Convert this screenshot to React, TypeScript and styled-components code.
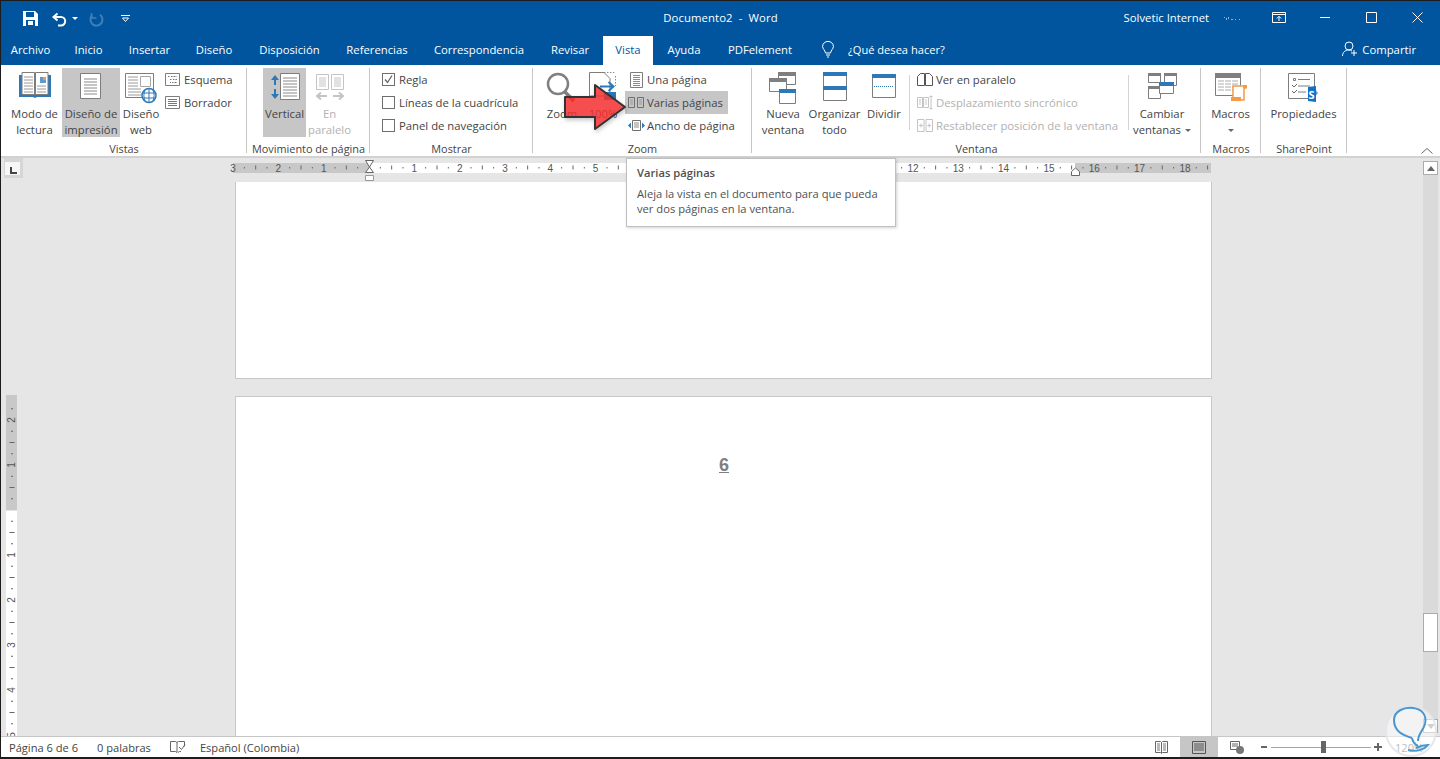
import React from "react";
import styled, { createGlobalStyle } from "styled-components";

const GlobalStyle = createGlobalStyle`
  html, body { margin: 0; padding: 0; background: #fff; }
  body { font-family: "Open Sans", "Noto Sans", "Liberation Sans", sans-serif; font-size: 11.3px; color: #444; }
  * { box-sizing: border-box; }
`;

const BLUE = "#01559f";
const G = "#7d7d7d";
const LG = "#a8a8a8";
const D = "#c4c4c4";
const B = "#2f78b7";
const O = "#f59a45";

const Root = styled.div`
  position: relative; width: 1440px; height: 759px; overflow: hidden;
  display: flex; flex-direction: column;
  border-top: 1px solid #1c1c1c; border-left: 1px solid #1c1c1c; border-bottom: 2px solid #1c1c1c;
  background: #e6e6e6;
`;
const TitleBar = styled.header`
  height: 35px; flex: none; background: ${BLUE}; color: #fff;
  display: grid; grid-template-columns: 1fr auto 1fr; align-items: center;
`;
const Qat = styled.div`display: flex; align-items: center; padding-left: 22px;`;
const QatItem = styled.span<{ $ml: number }>`display: flex; margin-left: ${p => p.$ml}px;`;
const DocTitle = styled.div`font-size: 11.3px; letter-spacing: .1px; white-space: pre; margin-top: -3px;`;
const TitleRight = styled.div`display: flex; justify-content: flex-end; align-items: center;`;
const UserName = styled.span`font-size: 11.3px; white-space: nowrap; margin-top: -3px;`;
const Account = styled.span`display: flex; margin: 0 15px 0 14px;`;
const WinButton = styled.span`width: 46px; display: flex; justify-content: center; margin-top: -3px;`;

const TabBar = styled.nav`height: 29px; flex: none; background: ${BLUE}; display: flex; align-items: stretch;`;
const Tab = styled.div<{ $w: number; $active?: boolean }>`
  width: ${p => p.$w}px; flex: none; display: flex; align-items: center; justify-content: center;
  font-size: 11.3px; white-space: nowrap; padding-bottom: 3px;
  color: ${p => (p.$active ? BLUE : "#fff")}; background: ${p => (p.$active ? "#fff" : "transparent")};
`;
const TellMe = styled.div`display: flex; align-items: center; color: #fff; font-size: 11.1px; margin-left: 17px; gap: 14px; white-space: nowrap; padding-bottom: 3px;`;
const Share = styled.div`display: flex; align-items: center; color: #fff; font-size: 11.3px; margin-left: auto; gap: 4px; padding: 0 24px 3px 0; white-space: nowrap;`;

const Ribbon = styled.section`
  height: 93px; flex: none; background: #fff; border-bottom: 2px solid #d2d2d2;
  padding-top: 3px; display: flex; align-items: flex-start;
`;
const Group = styled.div<{ $w: number }>`
  width: ${p => p.$w}px; height: 85px; flex: none; border-right: 1px solid #c6c6c6;
  display: flex; flex-direction: column;
`;
const GroupBody = styled.div<{ $pl?: number }>`height: 69px; display: flex; padding-left: ${p => p.$pl ?? 0}px; flex: none;`;
const GroupLabel = styled.div`height: 16px; margin-top: 4px; line-height: 16px; text-align: center; font-size: 10.9px; white-space: nowrap; margin-right: -1px;`;
const LargeButton = styled.div<{ $w: number; $on?: boolean; $off?: boolean; $ml?: number }>`
  width: ${p => p.$w}px; flex: none; height: 69px; display: flex; flex-direction: column; align-items: center;
  margin-left: ${p => p.$ml ?? 0}px;
  background: ${p => (p.$on ? "#c6c6c6" : "transparent")};
  color: ${p => (p.$off ? "#b1b1b1" : "#444")};
`;
const IconSlot = styled.div<{ $pt?: number }>`height: 38px; flex: none; padding-top: ${p => p.$pt ?? 4}px; display: flex; justify-content: center;`;
const LargeText = styled.div`font-size: 11.3px; line-height: 16px; text-align: center; white-space: nowrap;`;
const Caret = styled.span<{ $flush?: boolean }>`
  display: inline-block; width: 0; height: 0; margin-left: ${p => (p.$flush ? 0 : 4)}px; vertical-align: middle;
  border-left: 3px solid transparent; border-right: 3px solid transparent; border-top: 3px solid #666;
`;
const RowColumn = styled.div<{ $w?: number; $ml?: number }>`
  display: flex; flex-direction: column; flex: none; margin-left: ${p => p.$ml ?? 0}px;
  ${p => (p.$w ? `width:${p.$w}px;` : "")}
`;
const SmallRow = styled.div<{ $on?: boolean; $off?: boolean }>`
  height: 23px; display: flex; align-items: center; white-space: nowrap; font-size: 11.3px;
  background: ${p => (p.$on ? "#c6c6c6" : "transparent")};
  color: ${p => (p.$off ? "#b1b1b1" : "#444")};
`;
const RowIcon = styled.span<{ $w: number }>`width: ${p => p.$w}px; flex: none; display: flex; justify-content: center;`;
const Checkbox = styled.span`width: 13px; height: 13px; border: 1px solid #6f6f6f; background: #fff; display: block;`;
const InnerSep = styled.div<{ $ml: number }>`width: 1px; height: 55px; margin: 7px 0 0 ${p => p.$ml}px; background: #d4d4d4; flex: none;`;
const Collapse = styled.div`margin: 80px 7px 0 auto; display: flex;`;

const Main = styled.div`flex: 1; min-height: 0; display: flex;`;
const LeftColumn = styled.div`flex: 1; min-width: 0; display: flex; flex-direction: column;`;
const RulerRow = styled.div`height: 24px; flex: none; display: flex; align-items: flex-start; padding-left: 3px;`;
const Corner = styled.div`
  width: 19px; height: 20px; background: #d6d6d6; padding: 4px 3px 3px 1px; flex: none;
`;
const CornerFace = styled.div`
  width: 15px; height: 13px; background: #f7f7f7; position: relative;
  &::after { content: ""; position: absolute; left: 5px; top: 5px; width: 5px; height: 5px; border-left: 2px solid #444; border-bottom: 2px solid #444; }
`;
const Doc = styled.div`flex: 1; min-height: 0; display: flex; padding-left: 5px; overflow: hidden;`;
const Pages = styled.div`margin-left: 218px; width: 977px; display: flex; flex-direction: column; gap: 17px; flex: none;`;
const Page = styled.div<{ $h: number; $top?: boolean }>`
  height: ${p => p.$h}px; flex: none; background: #fff; border: 1px solid #c8c8c8;
  ${p => (p.$top ? "border-top: none;" : "")}
`;
const PageNumber = styled.div`
  margin-top: 56px; padding-left: 1px; text-align: center; font-family: "Liberation Sans", sans-serif; font-weight: 700;
  font-size: 18px; line-height: 24px; color: #7f7f7f; text-decoration: underline;
`;
const Scrollbar = styled.div`width: 15px; margin-right: 2px; flex: none; display: flex; flex-direction: column; padding: 3px 0 3px;`;
const ScrollButton = styled.div<{ $down?: boolean }>`
  height: 14px; flex: none; background: #fff; border: 1px solid #ababab; display: flex; align-items: center; justify-content: center;
  &::after {
    content: ""; width: 0; height: 0; border-left: 4px solid transparent; border-right: 4px solid transparent;
    ${p => (p.$down ? "border-top: 5px solid #a0a0a0;" : "border-bottom: 5px solid #666;")}
  }
`;
const Track = styled.div`flex: 1; background: #dadada; padding-top: 438px;`;
const Thumb = styled.div`height: 39px; background: #fff; border: 1px solid #ababab;`;

const StatusBar = styled.footer`
  height: 21px; flex: none; background: #fff; border-top: 1px solid #c6c6c6; display: flex; align-items: stretch;
  font-size: 11.1px; padding-right: 19px; color: #444;
`;
const StatusText = styled.span<{ $ml: number }>`margin-left: ${p => p.$ml}px; display: flex; align-items: center; white-space: nowrap;`;
const StatusIcon = styled.span<{ $ml: number }>`margin-left: ${p => p.$ml}px; display: flex; align-items: center;`;
const ViewButton = styled.span<{ $on?: boolean; $first?: boolean }>`
  width: 38px; display: flex; align-items: center; justify-content: center;
  ${p => (p.$first ? "margin-left: auto;" : "")}
  background: ${p => (p.$on ? "#c6c6c6" : "transparent")};
`;
const ZoomMinus = styled.span`width: 6px; height: 2px; background: #666; align-self: center; margin-left: 5px;`;
const ZoomTrack = styled.span`position: relative; width: 100px; height: 1px; background: #a6a6a6; align-self: center; margin: 0 3px 0 4px;`;
const ZoomThumb = styled.span`position: absolute; left: 50px; top: -6px; width: 5px; height: 12px; background: #666;`;
const ZoomPlus = styled.span`
  position: relative; width: 8px; height: 8px; align-self: center;
  &::before { content: ""; position: absolute; left: 0; top: 3px; width: 8px; height: 2px; background: #666; }
  &::after { content: ""; position: absolute; left: 3px; top: 0; width: 2px; height: 8px; background: #666; }
`;
const ZoomPercent = styled.span`width: 26px; margin-left: 13px; display: flex; align-items: center; white-space: nowrap; color: #777;`;

const Tooltip = styled.div`
  position: absolute; left: 625px; top: 157px; width: 270px; height: 69px; background: #fff;
  border: 1px solid #bfbfbf; box-shadow: 1px 1px 3px rgba(0,0,0,.18); padding: 6px 10px; color: #505050; font-size: 11.2px; line-height: 15px;
`;
const TooltipTitle = styled.div`font-weight: 600; margin-bottom: 6px;`;
const Overlay = styled.svg<{ $x: number; $y: number }>`position: absolute; left: ${p => p.$x}px; top: ${p => p.$y}px; display: block; overflow: visible;`;
const ArrowOverlay = styled(Overlay)`filter: drop-shadow(1px 2px 2px rgba(0,0,0,.25));`;
const RulerSvg = styled.svg`display: block; flex: none; overflow: visible; margin: -1px 0 0 210px;`;

const Ic = styled.svg`display: block; flex: none; overflow: visible;`;
const hl = (x1: number, x2: number, ys: number[]) => ys.map(y => `M${x1} ${y}H${x2}`).join("");

const Icon = ({ w, h, children }: { w: number; h: number; children: React.ReactNode }) => (
  <Ic width={w} height={h} viewBox={`0 0 ${w} ${h}`} fill="none">{children}</Ic>
);

/* Title bar */
const SaveIcon = () => (
  <Icon w={15} h={15}>
    <path d="M0 0h12l3 3v12H0z" fill="#fff" />
    <path d="M3 1h8v5H3z" fill={BLUE} />
    <path d="M3 9h9v6H3z" fill={BLUE} />
    <path d="M5 10h5v4H5z" fill="#fff" />
  </Icon>
);
const UndoIcon = ({ c = "#fff" }: { c?: string }) => (
  <Icon w={15} h={14}>
    <path d="M5.500 1.500 1.500 5l4 3.500" stroke={c} strokeWidth="2" />
    <path d="M2 5h7a4.200 4.200 0 0 1 0 8.400H6" stroke={c} strokeWidth="2" />
  </Icon>
);
const RedoIcon = () => (
  <Icon w={14} h={14}>
    <path d="M3.400 3.200a6 6 0 1 0 7.600-.4" stroke="#3f80ba" strokeWidth="2" />
    <path d="M2.500 1v5H7.500" stroke="#3f80ba" strokeWidth="1.600" />
  </Icon>
);
const TinyCaret = () => <Icon w={6} h={3}><path d="M0 0h6L3 3z" fill="#fff" /></Icon>;
const CustomizeIcon = () => (
  <Icon w={9} h={7}><path d="M0 .5h9" stroke="#fff" /><path d="M1.500 3h6L4.500 6.500z" stroke="#fff" /></Icon>
);
const AccountDots = () => (
  <Icon w={18} h={5}><path d="M1 1h1v1H1zM3 2h1v2H3zM5 1h1v2H5zM8 3h2v1H8zM12 3h1v1h-1zM16 3h1v1h-1z" fill="#8fb4d6" /></Icon>
);
const RibbonOptions = () => (
  <Icon w={14} h={11}>
    <path d="M.5.5h13v10H.5z" stroke="#fff" /><path d="M.5 2.500h13" stroke="#fff" />
    <path d="M7 9V4.500M4.800 6.500 7 4.300l2.200 2.200" stroke="#fff" />
  </Icon>
);
const MinIcon = () => <Icon w={10} h={10}><path d="M0 5.500h10" stroke="#fff" /></Icon>;
const MaxIcon = () => <Icon w={11} h={11}><path d="M.5.5h10v10H.5z" stroke="#fff" /></Icon>;
const CloseIcon = () => <Icon w={11} h={11}><path d="M.5.5l10 10M10.500.5l-10 10" stroke="#fff" /></Icon>;
const Bulb = () => (
  <Icon w={12} h={17}>
    <path d="M3.500 12C3 9 .6 8 .6 5.400a5.400 5 0 0 1 10.800 0C11.400 8 9 9 8.500 12z" stroke="#fff" />
    <path d="M4 14h4M5 16h2" stroke="#fff" />
  </Icon>
);
const ShareIcon = () => (
  <Icon w={16} h={16}>
    <circle cx="7" cy="5" r="4" stroke="#fff" />
    <path d="M.5 15c0-3.500 2.500-6 6-6 1.500 0 2.500.4 3.500 1" stroke="#fff" />
    <path d="M12 9v6M9 12h6" stroke="#fff" />
  </Icon>
);

/* Vistas */
const BookIcon = () => (
  <Icon w={32} h={26}>
    <path d="M0 3h32v22H18l-2 1-2-1H0z" fill={B} />
    <path d="M3 .5h12.500v22H3zM16.500.5H29v22H16.500z" fill="#fff" stroke={G} />
    <path d={hl(5, 14, [5, 8, 11, 14, 17, 20])} stroke="#9a9a9a" />
    <path d={hl(18, 27, [14, 17, 20])} stroke="#9a9a9a" />
    <path d="M21 5h6v6h-6z" fill="#5b9bd0" />
    <path d="M24 5h3v3h-3z" fill={O} />
  </Icon>
);
const PrintPageIcon = () => (
  <Icon w={22} h={27}>
    <path d="M.5.5h20v25H.5z" fill="#fff" stroke={G} />
    <path d={hl(4, 17, [6, 9, 12, 15, 18, 21])} stroke="#8a8a8a" />
  </Icon>
);
const WebIcon = () => (
  <Icon w={32} h={31}>
    <path d="M.5.5h28v24H.5z" fill="#fff" stroke={G} />
    <path d="M15.500 3.500h10v10h-10z" stroke={LG} />
    <path d={hl(3, 13, [4, 7, 10, 13])} stroke="#9a9a9a" />
    <path d={hl(3, 16, [16, 19, 22])} stroke="#9a9a9a" />
    <circle cx="24" cy="22.500" r="7" fill="#fff" stroke={B} strokeWidth="1.500" />
    <path d="M17 20h14M17 25h14M24 15.500v14M20 17c-1.500 4-1.500 7 0 11M28 17c1.500 4 1.500 7 0 11" stroke={B} />
  </Icon>
);
const EsquemaIcon = () => (
  <Icon w={15} h={13}>
    <path d="M.5.5h14v12H.5z" stroke={G} />
    <path d="M3 3.500h2M6 3.500h6M5 6.500h2M8 6.500h4M5 9.500h1M7 9.500h5" stroke="#777" strokeDasharray="1 .5" />
  </Icon>
);
const BorradorIcon = () => (
  <Icon w={15} h={13}>
    <path d="M.5.5h14v12H.5z" stroke={G} />
    <path d={hl(3, 12, [3.5, 5.5, 7.5, 9.5])} stroke="#777" />
  </Icon>
);
const CheckMark = () => <Icon w={11} h={11}><path d="M2 5.500 4.500 8.500 9 1.500" stroke="#666" strokeWidth="1.300" /></Icon>;

/* Movimiento */
const VerticalIcon = () => (
  <Icon w={30} h={28}>
    <path d="M5 2 1 7h3v5h2V7h3zM5 26 1 21h3v-5h2v5h3z" fill={B} />
    <path d="M10.500.5h19v26h-19z" fill="#fff" stroke={G} />
    <path d={hl(13, 27, [5, 8, 11, 14, 17, 20, 23])} stroke="#8a8a8a" />
  </Icon>
);
const ParallelIcon = () => (
  <Icon w={28} h={27}>
    <path d="M.5.5h12v15H.5zM15.500.5h12v15h-12z" stroke={D} />
    <path d={hl(3, 10, [4, 6, 8, 10, 12])} stroke={D} />
    <path d={hl(18, 25, [4, 6, 8, 10, 12])} stroke={D} />
    <path d="M5 18.500 1 22l4 3.500M1.500 22H11M23 18.500 27 22l-4 3.500M26.500 22H17" stroke={D} strokeWidth="2" />
  </Icon>
);

/* Zoom */
const MagnifierIcon = () => (
  <Icon w={30} h={29}>
    <path d="M17 18l6 6" stroke="#808080" strokeWidth="3.500" />
    <path d="M23 24l4 4" stroke="#a04a3a" strokeWidth="4" />
    <circle cx="11" cy="11" r="10" fill="#fff" stroke="#808080" strokeWidth="2.500" />
  </Icon>
);
const HundredIcon = () => (
  <Icon w={28} h={29}>
    <path d="M.5.5H15l6 6V24H.5z" fill="#fff" stroke={G} />
    <path d="M15 .5h10v2M26.500 4v10" stroke="#8a8a8a" strokeDasharray="1.500 1.500" />
    <path d="M11 14.500h13M19.500 10l5 4.500-5 4.500" stroke={B} strokeWidth="2" />
    <path d="M15 20h12v8H15z" fill={B} />
  </Icon>
);
const OnePageIcon = () => (
  <Icon w={13} h={16}>
    <path d="M.5.5h12v15H.5z" stroke={G} />
    <path d={hl(3, 10, [3.5, 5.5, 7.5, 9.5, 11.5, 13.5])} stroke="#8a8a8a" />
  </Icon>
);
const TwoPagesIcon = () => (
  <Icon w={16} h={11}>
    <path d="M.5.5h6v10h-6zM9.500.5h6v10h-6z" stroke="#6f6f6f" />
    <path d={hl(2, 5, [3, 5, 7])} stroke="#9a9a9a" />
    <path d={hl(11, 14, [3, 5, 7])} stroke="#9a9a9a" />
  </Icon>
);
const PageWidthIcon = () => (
  <Icon w={17} h={11}>
    <path d="M4.500.5h8v10h-8z" stroke="#6f6f6f" />
    <path d={hl(6, 11, [3, 5, 7])} stroke="#8a8a8a" />
    <path d="M3 2.500 0 5.500l3 3zM14 2.500l3 3-3 3z" fill={B} />
  </Icon>
);

/* Ventana */
const WindowBox = ({ x, y, w, h, bar, fill = "#fff" }: { x: number; y: number; w: number; h: number; bar: string; fill?: string }) => (
  <>
    <path d={`M${x + 0.5} ${y + 0.5}h${w - 1}v${h - 1}h-${w - 1}z`} fill={fill} stroke={G} />
    <path d={`M${x} ${y}h${w}v4h-${w}z`} fill={bar} />
  </>
);
const NewWindowIcon = () => (
  <Icon w={28} h={32}>
    <WindowBox x={9} y={0} w={18} h={13} bar="#7f7f7f" />
    <WindowBox x={0} y={6} w={18} h={14} bar="#7f7f7f" />
    <WindowBox x={10} y={17} w={17} h={15} bar={B} />
  </Icon>
);
const ArrangeIcon = () => (
  <Icon w={24} h={29}>
    <path d="M.5.5h23v28H.5z" fill="#fff" stroke={G} />
    <path d="M0 0h24v4H0zM0 14h24v4H0z" fill={B} />
  </Icon>
);
const SplitIcon = () => (
  <Icon w={24} h={24}>
    <path d="M.5.5h23v23H.5z" fill="#fff" stroke={G} />
    <path d="M0 0h24v4H0z" fill={B} />
    <path d="M2 12.500h20" stroke={B} strokeDasharray="1 1" />
  </Icon>
);
const SideBySideIcon = () => (
  <Icon w={16} h={13}>
    <path d="M.5 3.500l3-3h4v12h-7zM8.500.5h4l3 3v9h-7z" stroke="#555" />
  </Icon>
);
const SyncIcon = () => (
  <Icon w={16} h={15}>
    <path d="M.5 2.500h5v10h-5zM6.500 2.500h5v10h-5z" stroke={D} />
    <path d={hl(2, 4, [5, 7, 9])} stroke={D} /><path d={hl(8, 10, [5, 7, 9])} stroke={D} />
    <path d="M14 .5v14M12.500 1.500h3M12.500 13.500h3" stroke={D} />
  </Icon>
);
const ResetIcon = () => (
  <Icon w={16} h={13}>
    <path d="M.5.5h6.500v12H.5zM9 .5h6.500v12H9z" stroke={D} />
    <path d="M2 6.500h4M4 4.500v4M10.500 6.500h3.500M12.200 4.500v4" stroke={D} />
  </Icon>
);
const SwitchIcon = () => (
  <Icon w={29} h={26}>
    <path d="M.5.5h12v9H.5zM16.500.5h12v12h-12zM.5 13.500h12v12H.5z" stroke={G} />
    <path d="M0 0h13v3H0zM16 0h13v3H16zM0 13h13v3H0z" fill="#7f7f7f" />
    <WindowBox x={11} y={9} w={15} h={12} bar={B} />
  </Icon>
);
const MacrosIcon = () => (
  <Icon w={32} h={29}>
    <path d="M.5.5h25v22H.5z" fill="#fff" stroke={G} />
    <path d="M0 0h26v5H0z" fill="#7f7f7f" />
    <path d={hl(3, 23, [8, 11, 14, 17])} stroke="#aaa" strokeDasharray="6 1" />
    <path d="M18 13h13v2h-2v12H18z" fill="#fff" stroke={O} strokeWidth="1.500" />
    <path d="M16 24h10v4H16z" fill={O} />
    <path d="M28 12h4v3h-4z" fill={O} />
  </Icon>
);
const PropsIcon = () => (
  <Icon w={31} h={30}>
    <path d="M.5.5h26v25H.5z" fill="#fff" stroke={G} />
    <path d="M5.500 5.500h2v2h-2z" stroke={G} />
    <path d="M10 6.500h12M10 13h12M10 19h8" stroke={G} />
    <path d="M4 12l2 2 3-3M4 18l2 2 3-3" stroke="#666" />
    <path d="M26 15l4 5-4 5z" fill="#5a9fd8" />
    <path d="M20 14l8-1v16l-8-1z" fill="#1173c7" />
    <text x="20.500" y="26" fontSize="11" fontWeight="700" fill="#fff" fontFamily="Open Sans, sans-serif">S</text>
  </Icon>
);
const ChevronUp = () => <Icon w={12} h={6}><path d="M.5 5.500 6 .5l5.500 5" stroke="#666" /></Icon>;

/* Status */
const ProofIcon = () => (
  <Icon w={16} h={14}>
    <path d="M.5 1.500h5l1.500 1v10l-1.500-1h-5zM8 12.500l1.500-1H11M7 2.500l1.500-1h6v5" stroke="#666" />
    <path d="M9 7l2.500 2.500L15 4.500" stroke="#666" />
  </Icon>
);
const ReadIcon = () => (
  <Icon w={13} h={13}>
    <path d="M.5.5h5l1 1 1-1h5v11h-5l-1 1-1-1h-5zM6.500 1.500v11" stroke="#666" />
    <path d={hl(2, 5, [3, 5, 7, 9])} stroke="#777" /><path d={hl(8, 11, [3, 5, 7, 9])} stroke="#777" />
  </Icon>
);
const LayoutIcon = () => (
  <Icon w={14} h={13}>
    <path d="M.5.5h13v12H.5z" stroke="#555" />
    <path d={hl(2, 12, [3, 5, 7, 9])} stroke="#555" />
  </Icon>
);
const StatusWebIcon = () => (
  <Icon w={14} h={13}>
    <path d="M.5.5h9v8h-9z" stroke="#666" />
    <path d={hl(2, 8, [3, 5])} stroke="#666" />
    <circle cx="10" cy="9" r="4" fill="#777" />
  </Icon>
);

/* Rulers */
const RULER_FONT = '"Liberation Sans", sans-serif';
const HorizontalRuler = () => {
  const zero = 136, u = 45.33;
  const marks: React.ReactNode[] = [];
  for (let k = -12; k <= 74; k++) {
    if (k === 0) continue;
    if (k > 22 && k < 47) continue; // lies under the tooltip
    const x = zero + (k * u) / 4;
    if (k % 4 === 0) {
      marks.push(<text key={k} x={x} y="15" fontSize="10" fill="#555" textAnchor="middle" fontFamily={RULER_FONT}>{Math.abs(k / 4)}</text>);
    } else if (k % 2 === 0) {
      marks.push(<path key={k} d={`M${x} 8.500v4`} stroke="#666" />);
    } else {
      marks.push(<path key={k} d={`M${x} 10v1.500`} stroke="#666" />);
    }
  }
  return (
    <RulerSvg width={979} height={25} viewBox="0 0 979 25">
      <path d="M0 6h136v10H0zM842 6h136v10H842z" fill="#c8c8c8" />
      <path d="M136 6h706v10H136z" fill="#fff" />
      {marks}
      <path d="M132.500 3.500h8L136.500 10l4 5.500h-8l4-5.500z" fill="#fff" stroke="#666" />
      <path d="M132.500 18.500h8v5h-8z" fill="#fff" stroke="#999" />
      <path d="M838.500 14.500 842.500 11l4 3.500v4h-8z" fill="#fff" stroke="#666" />
    </RulerSvg>
  );
};
const VerticalRuler = () => {
  const zero = 328, u = 45;
  const marks: React.ReactNode[] = [];
  for (let k = -9; k <= 21; k++) {
    if (k === 0) continue;
    const y = zero + (k * u) / 4;
    if (k % 4 === 0) {
      marks.push(<text key={k} transform={`translate(9 ${y}) rotate(-90)`} fontSize="10" fill="#555" textAnchor="middle" fontFamily={RULER_FONT}>{Math.abs(k / 4)}</text>);
    } else if (k % 2 === 0) {
      marks.push(<path key={k} d={`M3.500 ${y}h5`} stroke="#666" />);
    } else {
      marks.push(<path key={k} d={`M5 ${y}h2`} stroke="#666" />);
    }
  }
  return (
    <Ic width={11} height={554} viewBox="0 0 11 554">
      <path d="M0 213h11v115H0z" fill="#c8c8c8" />
      <path d="M0 329h11v225H0z" fill="#fff" />
      {marks}
    </Ic>
  );
};

const TABS: [string, number][] = [
  ["Archivo", 59], ["Inicio", 57], ["Insertar", 65], ["Diseño", 64], ["Disposición", 87],
  ["Referencias", 88], ["Correspondencia", 116], ["Revisar", 66], ["Vista", 50], ["Ayuda", 62], ["PDFelement", 90],
];

export default function App() {
  return (
    <Root>
      <GlobalStyle />
      <TitleBar>
        <Qat>
          <QatItem $ml={0}><SaveIcon /></QatItem>
          <QatItem $ml={14}><UndoIcon /></QatItem>
          <QatItem $ml={5}><TinyCaret /></QatItem>
          <QatItem $ml={11}><RedoIcon /></QatItem>
          <QatItem $ml={18}><CustomizeIcon /></QatItem>
        </Qat>
        <DocTitle>Documento2  -  Word</DocTitle>
        <TitleRight>
          <UserName>Solvetic Internet</UserName>
          <Account><AccountDots /></Account>
          <WinButton><RibbonOptions /></WinButton>
          <WinButton><MinIcon /></WinButton>
          <WinButton><MaxIcon /></WinButton>
          <WinButton><CloseIcon /></WinButton>
        </TitleRight>
      </TitleBar>

      <TabBar>
        {TABS.map(([t, w]) => <Tab key={t} $w={w} $active={t === "Vista"}>{t}</Tab>)}
        <TellMe><Bulb /><span>¿Qué desea hacer?</span></TellMe>
        <Share><ShareIcon /><span>Compartir</span></Share>
      </TabBar>

      <Ribbon>
        <Group $w={246}>
          <GroupBody $pl={5}>
            <LargeButton $w={57}><IconSlot><BookIcon /></IconSlot><LargeText>Modo de<br />lectura</LargeText></LargeButton>
            <LargeButton $w={58} $ml={-1} $on><IconSlot $pt={5}><PrintPageIcon /></IconSlot><LargeText>Diseño de<br />impresión</LargeText></LargeButton>
            <LargeButton $w={40} $ml={1}><IconSlot $pt={5}><WebIcon /></IconSlot><LargeText>Diseño<br />web</LargeText></LargeButton>
            <RowColumn>
              <SmallRow><RowIcon $w={23}><EsquemaIcon /></RowIcon>Esquema</SmallRow>
              <SmallRow><RowIcon $w={23}><BorradorIcon /></RowIcon>Borrador</SmallRow>
            </RowColumn>
          </GroupBody>
          <GroupLabel>Vistas</GroupLabel>
        </Group>

        <Group $w={123}>
          <GroupBody $pl={16}>
            <LargeButton $w={43} $on><IconSlot $pt={5}><VerticalIcon /></IconSlot><LargeText>Vertical</LargeText></LargeButton>
            <LargeButton $w={45} $ml={1} $off><IconSlot $pt={6}><ParallelIcon /></IconSlot><LargeText>En<br />paralelo</LargeText></LargeButton>
          </GroupBody>
          <GroupLabel>Movimiento de página</GroupLabel>
        </Group>

        <Group $w={163}>
          <GroupBody $pl={7}>
            <RowColumn>
              <SmallRow><RowIcon $w={22}><Checkbox><CheckMark /></Checkbox></RowIcon>Regla</SmallRow>
              <SmallRow><RowIcon $w={22}><Checkbox /></RowIcon>Líneas de la cuadrícula</SmallRow>
              <SmallRow><RowIcon $w={22}><Checkbox /></RowIcon>Panel de navegación</SmallRow>
            </RowColumn>
          </GroupBody>
          <GroupLabel>Mostrar</GroupLabel>
        </Group>

        <Group $w={219}>
          <GroupBody $pl={10}>
            <LargeButton $w={38}><IconSlot $pt={5}><MagnifierIcon /></IconSlot><LargeText>Zoom</LargeText></LargeButton>
            <LargeButton $w={44}><IconSlot><HundredIcon /></IconSlot><LargeText>100%</LargeText></LargeButton>
            <RowColumn $w={103}>
              <SmallRow><RowIcon $w={22}><OnePageIcon /></RowIcon>Una página</SmallRow>
              <SmallRow $on><RowIcon $w={22}><TwoPagesIcon /></RowIcon>Varias páginas</SmallRow>
              <SmallRow><RowIcon $w={22}><PageWidthIcon /></RowIcon>Ancho de página</SmallRow>
            </RowColumn>
          </GroupBody>
          <GroupLabel>Zoom</GroupLabel>
        </Group>

        <Group $w={449}>
          <GroupBody $pl={8}>
            <LargeButton $w={46}><IconSlot><NewWindowIcon /></IconSlot><LargeText>Nueva<br />ventana</LargeText></LargeButton>
            <LargeButton $w={57}><IconSlot><ArrangeIcon /></IconSlot><LargeText>Organizar<br />todo</LargeText></LargeButton>
            <LargeButton $w={42}><IconSlot $pt={6}><SplitIcon /></IconSlot><LargeText>Dividir</LargeText></LargeButton>
            <InnerSep $ml={4} />
            <RowColumn $w={218} $ml={4}>
              <SmallRow><RowIcon $w={22}><SideBySideIcon /></RowIcon>Ver en paralelo</SmallRow>
              <SmallRow $off><RowIcon $w={22}><SyncIcon /></RowIcon>Desplazamiento sincrónico</SmallRow>
              <SmallRow $off><RowIcon $w={22}><ResetIcon /></RowIcon>Restablecer posición de la ventana</SmallRow>
            </RowColumn>
            <InnerSep $ml={-4} />
            <LargeButton $w={66}><IconSlot $pt={5}><SwitchIcon /></IconSlot><LargeText>Cambiar<br />ventanas<Caret /></LargeText></LargeButton>
          </GroupBody>
          <GroupLabel>Ventana</GroupLabel>
        </Group>

        <Group $w={60}>
          <GroupBody>
            <LargeButton $w={59}><IconSlot $pt={5}><MacrosIcon /></IconSlot><LargeText>Macros<br /><Caret $flush /></LargeText></LargeButton>
          </GroupBody>
          <GroupLabel>Macros</GroupLabel>
        </Group>

        <Group $w={86}>
          <GroupBody>
            <LargeButton $w={85}><IconSlot $pt={5}><PropsIcon /></IconSlot><LargeText>Propiedades</LargeText></LargeButton>
          </GroupBody>
          <GroupLabel>SharePoint</GroupLabel>
        </Group>

        <Collapse><ChevronUp /></Collapse>
      </Ribbon>

      <Main>
        <LeftColumn>
          <RulerRow>
            <Corner><CornerFace /></Corner>
            <HorizontalRuler />
          </RulerRow>
          <Doc>
            <VerticalRuler />
            <Pages>
              <Page $h={197} $top />
              <Page $h={400}><PageNumber>6</PageNumber></Page>
            </Pages>
          </Doc>
        </LeftColumn>
        <Scrollbar>
          <ScrollButton />
          <Track><Thumb /></Track>
          <ScrollButton $down />
        </Scrollbar>
      </Main>

      <StatusBar>
        <StatusText $ml={8}>Página 6 de 6</StatusText>
        <StatusText $ml={19}>0 palabras</StatusText>
        <StatusIcon $ml={19}><ProofIcon /></StatusIcon>
        <StatusText $ml={14}>Español (Colombia)</StatusText>
        <ViewButton $first><ReadIcon /></ViewButton>
        <ViewButton $on><LayoutIcon /></ViewButton>
        <ViewButton><StatusWebIcon /></ViewButton>
        <ZoomMinus />
        <ZoomTrack><ZoomThumb /></ZoomTrack>
        <ZoomPlus />
        <ZoomPercent>120%</ZoomPercent>
      </StatusBar>

      <Tooltip>
        <TooltipTitle>Varias páginas</TooltipTitle>
        Aleja la vista en el documento para que pueda<br />ver dos páginas en la ventana.
      </Tooltip>

      <ArrowOverlay $x={562} $y={82} width={66} height={50} viewBox="0 0 66 50">
        <path d="M2 14h30V2l30 22-30 22V34H2z" fill="rgba(255,50,50,.82)" stroke="#333" strokeWidth="2" strokeLinejoin="round" />
      </ArrowOverlay>

      <Overlay $x={1384} $y={704} width={52} height={52} viewBox="0 0 52 52">
        <circle cx="26" cy="26" r="25" fill="rgba(255,255,255,.5)" stroke="rgba(225,230,235,.9)" strokeWidth="2" />
        <path d="M27 33C17 30 9 26 9 15 9 6 19 2 28 3c9 1 14 7 12 16-2 7-7 10-7 17" stroke="#4a97d0" strokeWidth="2" fill="none" />
        <path d="M27 33c1 5 4 7 6 8M23 45c8 2 16 0 20-5-6 0-10 2-12 3" stroke="#4a97d0" strokeWidth="2" fill="none" />
      </Overlay>
    </Root>
  );
}
